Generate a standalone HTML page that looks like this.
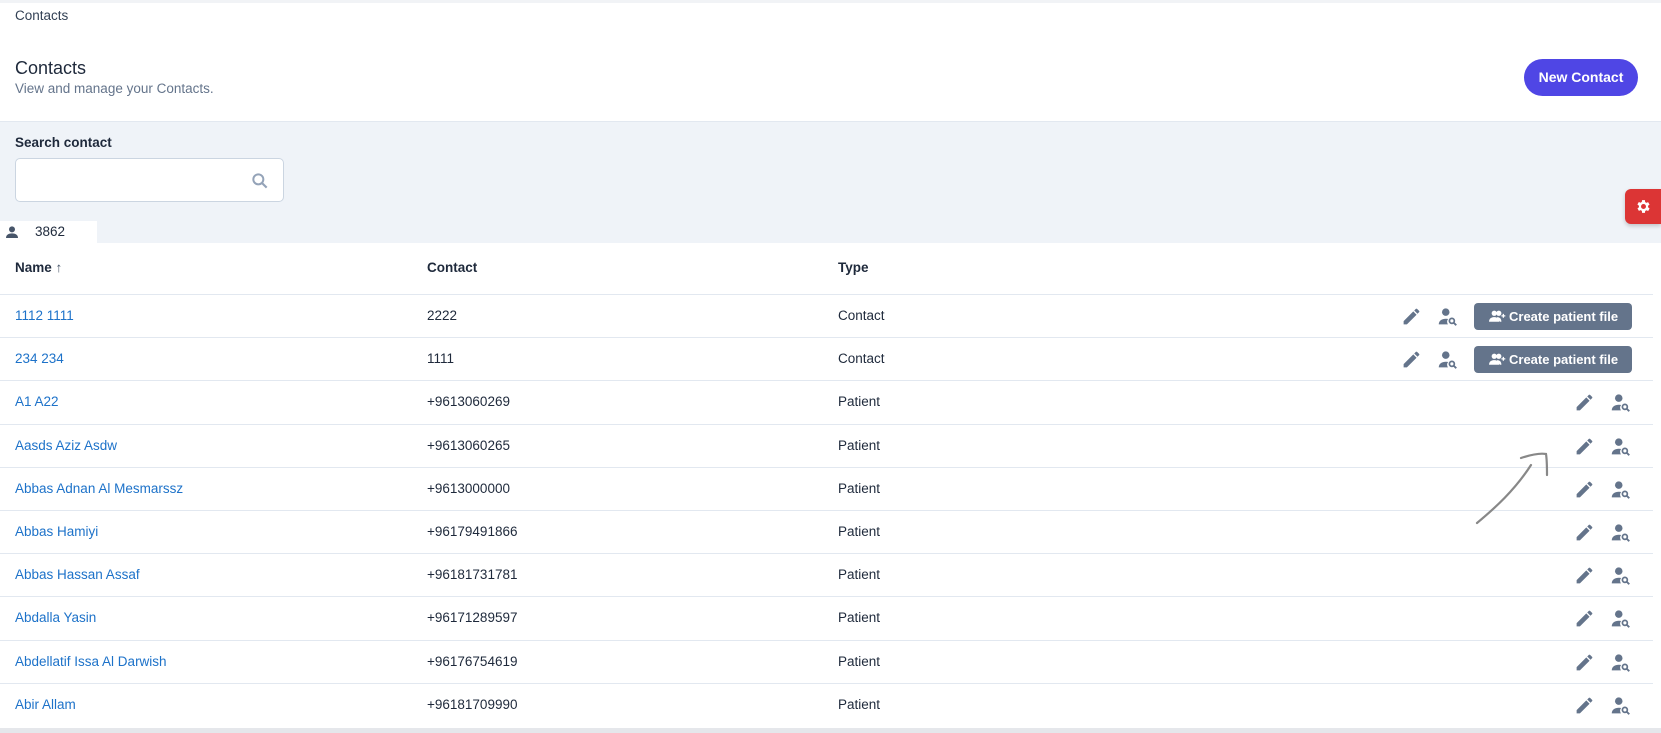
<!DOCTYPE html>
<html><head><meta charset="utf-8"><style>
*{box-sizing:border-box;margin:0;padding:0}
body{width:1661px;height:733px;overflow:hidden;background:#fff;font-family:"Liberation Sans",sans-serif;color:#1e293b;position:relative;font-size:14px}
.top{position:absolute;top:0;left:0;right:0;height:3px;background:#f1f3f6}
.abs{position:absolute}
.gray{position:absolute;top:121px;left:0;width:1661px;height:122px;background:#eff3f8;border-top:1px solid #e2e8f0}
.input{position:absolute;left:15px;top:158px;width:269px;height:44px;background:#fff;border:1px solid #cbd5e1;border-radius:5px}
.row{position:absolute;left:0;width:1653px;height:43px;border-top:1px solid #e2e8f0}
.row span{position:absolute;top:13px;font-size:13.5px}
.nm{left:15px;color:#1d72c9}
.ct{left:427px}.tp{left:838px}
.btn{position:absolute;left:1474px;top:8px;width:158px;height:27px;background:#64748b;border-radius:4px;color:#fff;font-size:13px;font-weight:bold;line-height:27px;padding-left:35px;white-space:nowrap}
svg.ic{position:absolute;top:11px}
.hd{font-size:13.5px;font-weight:600}
</style></head><body>
<div class="top"></div>
<div class="abs" style="left:15px;top:8px;font-size:13.5px;color:#334155">Contacts</div>
<div class="abs" style="left:15px;top:58px;font-size:18px;color:#1e293b">Contacts</div>
<div class="abs" style="left:15px;top:81px;font-size:13.5px;color:#64748b">View and manage your Contacts.</div>
<div class="abs" style="left:1524px;top:59px;width:114px;height:37px;background:#4f46e5;border-radius:19px;color:#fff;font-weight:bold;font-size:14px;text-align:center;line-height:37px">New Contact</div>
<div class="gray"></div>
<div class="abs" style="left:15px;top:135px;font-size:13.5px;font-weight:600;color:#1e293b">Search contact</div>
<div class="input"><svg style="position:absolute;left:234px;top:12px" width="20" height="20" viewBox="0 0 24 24"><circle cx="10" cy="10" r="6" fill="none" stroke="#94a3b8" stroke-width="2.4"/><path d="M14.5 14.5L20 20" stroke="#94a3b8" stroke-width="2.6"/></svg></div>
<div class="abs" style="left:0;top:221px;width:97px;height:22px;background:#fff"></div>
<svg class="abs" style="left:4px;top:224px" width="16" height="16" viewBox="0 0 24 24"><circle cx="12" cy="8" r="4.5" fill="#475569"/><path d="M3 21c0-5 4-7 9-7s9 2 9 7z" fill="#475569"/></svg>
<div class="abs" style="left:35px;top:224px;font-size:13.5px">3862</div>
<div class="abs" style="left:1625px;top:189px;width:36px;height:35px;background:#dc3535;border-radius:6px 0 0 6px;box-shadow:0 2px 4px rgba(0,0,0,.2)"><svg style="position:absolute;left:10px;top:9px" width="17" height="17" viewBox="0 0 24 24"><path fill="#fff" d="M19.4 13a7.5 7.5 0 000-2l2.1-1.6-2-3.5-2.5 1a7 7 0 00-1.7-1L15 3h-4l-.4 2.7a7 7 0 00-1.7 1l-2.5-1-2 3.5L6.6 11a7.5 7.5 0 000 2l-2.1 1.6 2 3.5 2.5-1a7 7 0 001.7 1L11 21h4l.4-2.7a7 7 0 001.7-1l2.5 1 2-3.5zM13 15.5a3.5 3.5 0 110-7 3.5 3.5 0 010 7z" transform="translate(-1 0)"/></svg></div>
<div class="abs hd" style="left:15px;top:260px">Name <span style="font-weight:normal;color:#475569">↑</span></div>
<div class="abs hd" style="left:427px;top:260px">Contact</div>
<div class="abs hd" style="left:838px;top:260px">Type</div>
<div id="rows"></div>
<svg class="abs" style="left:0;top:0" width="1661" height="733"><path d="M1477 523C1495 508 1515 490 1531 465M1521 458C1530 455 1540 453 1546 454C1547 460 1547 468 1547 475" fill="none" stroke="#888" stroke-width="2.2" stroke-linecap="round"/></svg>
<div class="abs" style="left:0;top:728px;width:1661px;height:5px;background:#e5e7eb"></div>
<script>
var d=[["1112 1111","2222","Contact"],["234 234","1111","Contact"],["A1 A22","+9613060269","Patient"],["Aasds Aziz Asdw","+9613060265","Patient"],["Abbas Adnan Al Mesmarssz","+9613000000","Patient"],["Abbas Hamiyi","+96179491866","Patient"],["Abbas Hassan Assaf","+96181731781","Patient"],["Abdalla Yasin","+96171289597","Patient"],["Abdellatif Issa Al Darwish","+96176754619","Patient"],["Abir Allam","+96181709990","Patient"]];
var pen='<path fill="#64748b" d="M3 17.25V21h3.75L17.8 9.94l-3.75-3.75zM20.7 7.04a1 1 0 000-1.41l-2.34-2.34a1 1 0 00-1.41 0l-1.83 1.83 3.75 3.75z"/>';
var ps='<circle cx="10" cy="7" r="4.3" fill="#64748b"/><path fill="#64748b" d="M2 21c0-4.5 4-6.5 8-6.5 1 0 2 .1 2.7.3A5 5 0 0012.5 21z"/><circle cx="17" cy="17" r="2.8" fill="none" stroke="#64748b" stroke-width="2"/><path d="M19 19l3 3" stroke="#64748b" stroke-width="2.2"/>';
var h='';
d.forEach(function(r,i){var t=294+i*43.2;var c=r[2]=="Contact";var px=c?1401:1574;
h+='<div class="row" style="top:'+t+'px"><span class="nm">'+r[0]+'</span><span class="ct">'+r[1]+'</span><span class="tp">'+r[2]+'</span>'+
'<svg class="ic" style="left:'+px+'px" width="21" height="21" viewBox="0 0 24 24">'+pen+'</svg>'+
'<svg class="ic" style="left:'+(px+36)+'px" width="21" height="21" viewBox="0 0 24 24">'+ps+'</svg>'+
(c?'<div class="btn"><svg style="position:absolute;left:15px;top:7px" width="17" height="13" viewBox="0 0 26 20"><circle cx="8" cy="5" r="4" fill="#fff"/><circle cx="15" cy="5" r="4" fill="#fff"/><path d="M0 18c0-5 4-7 8-7s8 2 8 7zM12 11c4 0 7 2 7 7h-2" fill="#fff"/><path d="M22 6v6M19 9h6" stroke="#fff" stroke-width="2"/></svg>Create patient file</div>':'')+'</div>';});
document.getElementById('rows').innerHTML=h;
</script>
</body></html>
